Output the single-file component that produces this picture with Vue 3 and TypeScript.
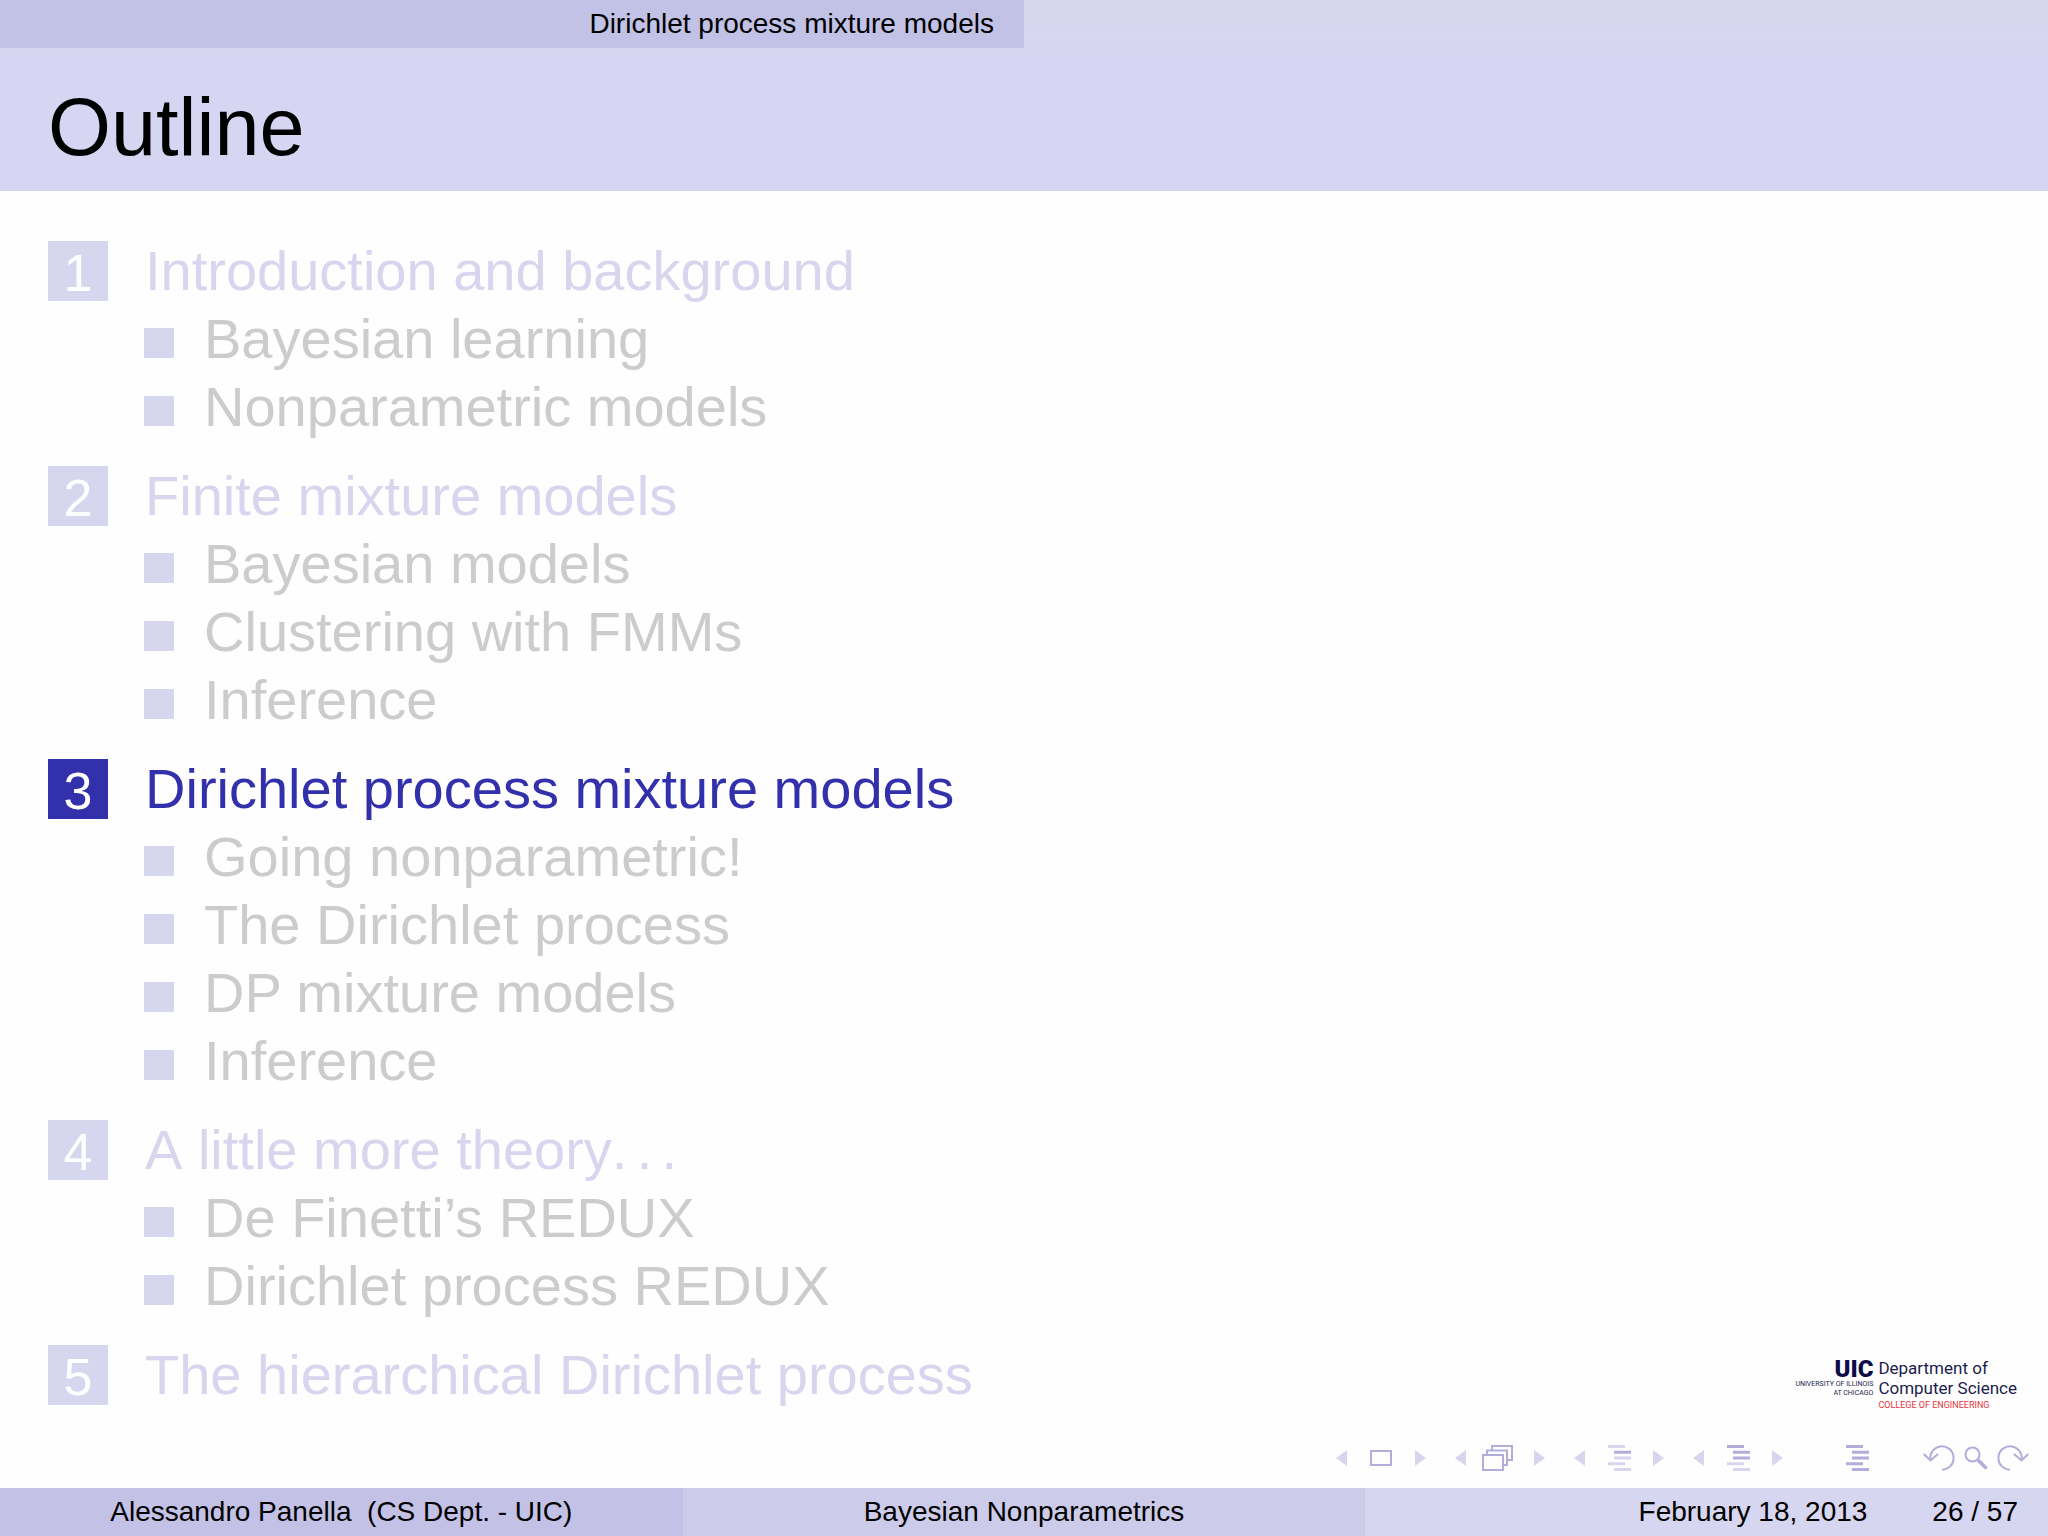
<script setup lang="ts">
interface Section {
  title: string
  active?: boolean
  items: string[]
}

const sections: Section[] = [
  { title: 'Introduction and background', items: ['Bayesian learning', 'Nonparametric models'] },
  { title: 'Finite mixture models', items: ['Bayesian models', 'Clustering with FMMs', 'Inference'] },
  {
    title: 'Dirichlet process mixture models',
    active: true,
    items: ['Going nonparametric!', 'The Dirichlet process', 'DP mixture models', 'Inference'],
  },
  { title: 'A little more theory.\u2006.\u2006.', items: ['De Finetti’s REDUX', 'Dirichlet process REDUX'] },
  { title: 'The hierarchical Dirichlet process', items: [] },
]

// Each outline glyph has five bars; indented bars start 6px in.
const barIndent = [0, 6, 6, 0, 6]

type Glyph = 'slide' | 'frames' | 'bars'
interface NavGroup {
  name: string
  glyph: Glyph
  dark?: boolean[]
}

const groups: NavGroup[] = [
  { name: 'slide', glyph: 'slide' },
  { name: 'frame', glyph: 'frames' },
  { name: 'subsection', glyph: 'bars', dark: [false, true, false, false, false] },
  { name: 'section', glyph: 'bars', dark: [true, true, true, false, false] },
]
</script>

<template>
  <div class="slide">
    <header>
      <div class="section-bar">
        <a href="#section-3" class="current">Dirichlet process mixture models</a>
      </div>
      <h1>Outline</h1>
    </header>

    <main>
      <ol class="outline">
        <li v-for="(s, i) in sections" :id="`section-${i + 1}`" :key="s.title" :class="{ active: s.active }">
          <div class="heading">
            <span class="number">{{ i + 1 }}</span>
            <span>{{ s.title }}</span>
          </div>
          <ul v-if="s.items.length">
            <li v-for="item in s.items" :key="item"><span class="bullet"></span>{{ item }}</li>
          </ul>
        </li>
      </ol>

      <aside>
        <div class="logo">
          <div class="logo-left">
            <div class="uic">UIC</div>
            <div class="campus">UNIVERSITY OF ILLINOIS<br />AT CHICAGO</div>
          </div>
          <div class="logo-right">
            <div class="dept">Department of<br />Computer Science</div>
            <div class="college">COLLEGE OF ENGINEERING</div>
          </div>
        </div>

        <nav aria-label="Slide navigation">
          <div v-for="g in groups" :key="g.name" class="group">
            <button type="button" :aria-label="`Previous ${g.name}`">
              <svg width="11" height="16" class="light"><path d="M0 8 11 0V16Z" /></svg>
            </button>
            <button type="button" :aria-label="`Go to ${g.name}`">
              <svg v-if="g.glyph === 'slide'" width="22" height="16" class="line">
                <rect x="1" y="1" width="20" height="14" />
              </svg>
              <svg v-else-if="g.glyph === 'frames'" width="36" height="26" viewBox="2 0 36 26" class="line">
                <path d="M12 5V1H32V15H28M7 10V5.500H27V20H23" />
                <rect x="3" y="10" width="20" height="15" />
              </svg>
              <svg v-else width="23" height="26">
                <rect
                  v-for="(x, r) in barIndent"
                  :key="r"
                  :x="x"
                  :y="r * 5.75"
                  width="17"
                  height="3"
                  :class="g.dark?.[r] ? 'dark' : 'light'"
                />
              </svg>
            </button>
            <button type="button" :aria-label="`Next ${g.name}`">
              <svg width="11" height="16" class="light"><path d="M11 8 0 0V16Z" /></svg>
            </button>
          </div>
          <button type="button" class="document" aria-label="Document">
            <svg width="23" height="26" class="dark">
              <rect v-for="(x, r) in barIndent" :key="r" :x="x" :y="r * 5.75" width="17" height="3" />
            </svg>
          </button>
          <div class="history">
            <button type="button" aria-label="Back">
              <svg width="32" height="28" class="line">
                <path d="M7.500 16.500A11.700 11.700 0 1 1 19 25.700M.7 10 7.500 16.500 15 10" />
              </svg>
            </button>
            <button type="button" aria-label="Search">
              <svg width="24" height="24" class="line">
                <circle cx="8.500" cy="8.500" r="7" />
                <path d="M14 14 22.500 22.500" stroke-width="3.500" />
              </svg>
            </button>
            <button type="button" aria-label="Forward">
              <svg width="32" height="28" class="line">
                <path d="M24.500 16.500A11.700 11.700 0 1 0 13 25.700M31.300 10 24.500 16.500 17 10" />
              </svg>
            </button>
          </div>
        </nav>
      </aside>
    </main>

    <footer>
      <div class="author">Alessandro Panella&nbsp; (CS Dept. - UIC)</div>
      <div class="talk">Bayesian Nonparametrics</div>
      <div class="date"><span>February 18, 2013</span><span>26 / 57</span></div>
    </footer>
  </div>
</template>

<style>
body {
  margin: 0;
  background: #fefefe;
}
</style>

<style scoped>
.slide {
  display: flex;
  flex-direction: column;
  min-height: 100vh;
  font-family: 'Liberation Sans', Arial, sans-serif;
  font-size: 28px;
  color: #000;
}

header {
  background: linear-gradient(#d6d7ed, #d6d6f2 60px);
}

.section-bar {
  display: flex;
}

.current {
  box-sizing: border-box;
  width: 50%;
  padding-right: 30px;
  line-height: 48px;
  text-align: right;
  text-decoration: none;
  color: #000;
  background: #c2c2e7;
}

h1 {
  margin: 0;
  padding: 31px 48px 16px;
  font-size: 81px;
  font-weight: 400;
  line-height: 96px;
}

main {
  flex: 1;
  display: flex;
  justify-content: space-between;
}

.outline,
.outline ul {
  margin: 0;
  padding: 0;
  list-style: none;
}

.outline {
  display: flex;
  flex-direction: column;
  gap: 21px;
  padding: 46px 0 40px 48px;
  font-size: 56px;
  line-height: 68px;
  color: #cccbce;
}

.heading {
  display: flex;
  align-items: center;
  gap: 37px;
  font-kerning: none;
  color: #d7d6ee;
}

.number {
  width: 60px;
  height: 60px;
  font-size: 52px;
  line-height: 64px;
  text-align: center;
  color: #fff;
  background: #d6d6ef;
}

.active .heading {
  color: #3330ac;
}

.active .number {
  background: #3330ac;
}

.outline ul {
  padding-left: 96px;
}

.outline ul li {
  display: flex;
  align-items: baseline;
  gap: 30px;
}

.bullet {
  width: 30px;
  height: 30px;
  background: #d6d6ef;
}

aside {
  display: flex;
  flex-direction: column;
  justify-content: flex-end;
  align-items: flex-end;
  padding: 0 19px 16px 0;
}

.logo {
  display: flex;
  gap: 5px;
  margin-right: 12px;
  margin-bottom: 32px;
  font-family: Roboto, 'Liberation Sans', sans-serif;
  color: #1c1c4c;
}

.logo-left {
  text-align: right;
}

.uic {
  font-size: 24px;
  font-weight: 900;
  line-height: 22px;
  color: #0c0c48;
}

.campus {
  font-size: 7px;
  line-height: 9px;
}

.dept {
  font-size: 17px;
  line-height: 20px;
}

.college {
  font-size: 9px;
  line-height: 14px;
  color: #e8343c;
}

nav {
  display: flex;
  align-items: center;
  gap: 29px;
}

.group {
  display: flex;
  align-items: center;
  justify-content: space-between;
  width: 90px;
}

.document {
  margin-left: 34px;
}

.history {
  display: flex;
  align-items: center;
  gap: 9px;
  margin-left: 25px;
}

button {
  display: block;
  padding: 0;
  border: 0;
  background: none;
}

svg {
  display: block;
}

.light {
  fill: #d8d6ee;
}

.dark {
  fill: #b2aedc;
}

.line {
  fill: none;
  stroke: #b2aedc;
  stroke-width: 2;
}

footer {
  display: grid;
  grid-template-columns: repeat(3, 1fr);
  line-height: 48px;
  text-align: center;
}

.author {
  background: #c3c1e6;
}

.talk {
  background: #cccbe9;
}

.date {
  display: flex;
  justify-content: flex-end;
  gap: 65px;
  padding-right: 30px;
  background: #d6d6f0;
}
</style>
